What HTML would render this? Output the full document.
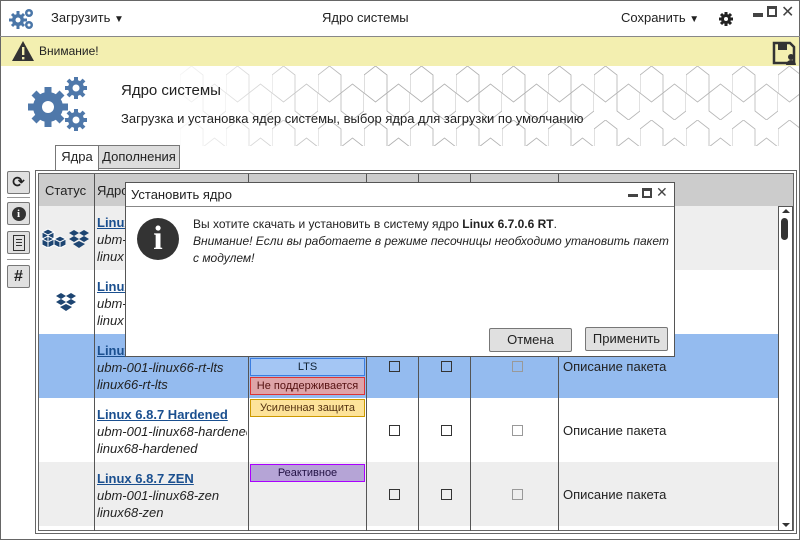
<!DOCTYPE html>
<html><head><meta charset="utf-8">
<style>
*{box-sizing:border-box;margin:0;padding:0}
body{width:800px;height:540px;overflow:hidden;background:#fff;font-family:"Liberation Sans","DejaVu Sans",sans-serif;font-size:13px;color:#222;position:relative}
.a{position:absolute}
.frame{left:0;top:0;width:800px;height:540px;border:1px solid #666}
.btn{background:#e0e0e0;border:1px solid #777;border-radius:2px}
.lnk{color:#1a4f8f;font-weight:bold;text-decoration:underline}
.it{font-style:italic;color:#222}
.cb{position:absolute;width:11px;height:11px;border:1px solid #333;background:transparent}
.cb.g{border-color:#999}
.tag{position:absolute;left:250px;width:115px;height:18px;font-size:11px;text-align:center;line-height:16px;border:1px solid}
</style></head><body>
<div class="a frame"></div>
<!-- top bar -->
<svg class="a" style="left:8px;top:6px" width="28" height="24" viewBox="0 0 28 24">
<g fill="#4a76a8"><circle cx="10" cy="14" r="6"/><circle cx="21" cy="7" r="4"/><circle cx="21" cy="19" r="4"/>
<g stroke="#4a76a8" stroke-width="3"><line x1="10" y1="5" x2="10" y2="23"/><line x1="1" y1="14" x2="19" y2="14"/><line x1="4" y1="8" x2="16" y2="20"/><line x1="16" y1="8" x2="4" y2="20"/></g></g>
<circle cx="10" cy="14" r="2.5" fill="#fff"/><circle cx="21" cy="7" r="1.5" fill="#fff"/><circle cx="21" cy="19" r="1.5" fill="#fff"/></svg>
<div class="a" style="left:51px;top:10px">Загрузить <span style="font-size:10px">▼</span></div>
<div class="a" style="left:322px;top:10px">Ядро системы</div>
<div class="a" style="left:621px;top:10px">Сохранить <span style="font-size:10px">▼</span></div>
<svg class="a" style="left:718px;top:11px" width="16" height="16" viewBox="0 0 16 16"><g fill="#222"><circle cx="8" cy="8" r="5"/><g stroke="#222" stroke-width="3"><line x1="8" y1="1" x2="8" y2="15"/><line x1="1" y1="8" x2="15" y2="8"/><line x1="3" y1="3" x2="13" y2="13"/><line x1="13" y1="3" x2="3" y2="13"/></g></g><circle cx="8" cy="8" r="2" fill="#fff"/></svg>
<div class="a" style="left:753px;top:13px;width:10px;height:4px;background:#444"></div>
<div class="a" style="left:767px;top:6px;width:10px;height:11px;border:2px solid #444;border-top-width:3px"></div>
<div class="a" style="left:781px;top:2px;font-size:16px;color:#444">✕</div>
<div class="a" style="left:0;top:36px;width:800px;height:1px;background:#888"></div>
<!-- yellow -->
<div class="a" style="left:1px;top:37px;width:798px;height:29px;background:#f3efb0"></div>
<svg class="a" style="left:11px;top:40px" width="24" height="22"><path d="M12 1 L23 21 L1 21 Z" fill="#333"/><rect x="11" y="7" width="2.4" height="8" fill="#f3efb0"/><rect x="11" y="17" width="2.4" height="2.4" fill="#f3efb0"/></svg>
<div class="a" style="left:39px;top:44px;font-size:12px">Внимание!</div>
<svg class="a" style="left:772px;top:41px" width="26" height="24"><path d="M2 2h16l4 4v16H2z" fill="none" stroke="#333" stroke-width="2.5"/><rect x="6" y="3" width="9" height="6" fill="#333"/><circle cx="19" cy="16" r="3" fill="#333"/><path d="M14 24a5 5 0 0 1 10 0z" fill="#333"/></svg>
<!-- header hex -->
<svg class="a" style="left:180px;top:66px" width="619" height="80">
<defs><pattern id="hx" width="46" height="54" patternUnits="userSpaceOnUse"><path d="M0 9l11.5-9 11.5 9v18l-11.5 9L0 27zM23 27v18l11.5 9 11.5-9V27L34.5 18 23 27" fill="none" stroke="#999" stroke-width="0.8"/></pattern>
<linearGradient id="fd" x1="0" x2="1"><stop offset="0" stop-color="#fff" stop-opacity="0.9"/><stop offset="0.3" stop-color="#fff" stop-opacity="0.2"/><stop offset="1" stop-color="#fff" stop-opacity="0.3"/></linearGradient></defs>
<rect width="619" height="80" fill="url(#hx)"/><rect width="619" height="80" fill="url(#fd)"/></svg>
<svg class="a" style="left:26px;top:74px" width="66" height="62" viewBox="0 0 66 62">
<g fill="#4f78aa"><circle cx="22" cy="33" r="15"/><g stroke="#4f78aa" stroke-width="7"><line x1="22" y1="13" x2="22" y2="53"/><line x1="2" y1="33" x2="42" y2="33"/><line x1="8" y1="19" x2="36" y2="47"/><line x1="36" y1="19" x2="8" y2="47"/></g>
<circle cx="50" cy="14" r="8"/><g stroke="#4f78aa" stroke-width="4"><line x1="50" y1="3" x2="50" y2="25"/><line x1="39" y1="14" x2="61" y2="14"/><line x1="42" y1="6" x2="58" y2="22"/><line x1="58" y1="6" x2="42" y2="22"/></g>
<circle cx="50" cy="46" r="8"/><g stroke="#4f78aa" stroke-width="4"><line x1="50" y1="35" x2="50" y2="57"/><line x1="39" y1="46" x2="61" y2="46"/><line x1="42" y1="38" x2="58" y2="54"/><line x1="58" y1="38" x2="42" y2="54"/></g></g>
<circle cx="22" cy="33" r="6" fill="#fff"/><circle cx="50" cy="14" r="3.5" fill="#fff"/><circle cx="50" cy="46" r="3.5" fill="#fff"/></svg>
<div class="a" style="left:121px;top:82px;font-size:15px">Ядро системы</div>
<div class="a" style="left:121px;top:111px;font-size:13px">Загрузка и установка ядер системы, выбор ядра для загрузки по умолчанию</div>
<!-- tabs -->
<div class="a" style="left:55px;top:145px;width:44px;height:26px;border:1px solid #777;border-bottom:none;background:#fff;text-align:center;line-height:22px">Ядра</div>
<div class="a" style="left:98px;top:145px;width:82px;height:24px;border:1px solid #777;background:#ddd;text-align:center;line-height:22px">Дополнения</div>
<!-- left toolbar -->
<div class="a btn" style="left:7px;top:171px;width:23px;height:23px;text-align:center;line-height:21px;font-weight:bold;font-size:15px">⟳</div>
<div class="a" style="left:7px;top:197px;width:23px;height:1px;background:#999"></div>
<div class="a btn" style="left:7px;top:202px;width:23px;height:23px"><div style="margin:4px auto;width:14px;height:14px;border-radius:7px;background:#333;color:#fff;font-size:11px;font-weight:bold;text-align:center;line-height:14px;font-family:'Liberation Serif',serif">i</div></div>
<div class="a btn" style="left:7px;top:231px;width:23px;height:23px"><div style="margin:3px auto;width:12px;height:16px;border:1.5px solid #333;padding:3px 2px"><div style="border-top:1px solid #333;height:3px"></div><div style="border-top:1px solid #333;height:3px"></div><div style="border-top:1px solid #333"></div></div></div>
<div class="a" style="left:7px;top:259px;width:23px;height:1px;background:#999"></div>
<div class="a btn" style="left:7px;top:265px;width:23px;height:23px;text-align:center;line-height:21px;font-weight:bold;font-size:16px">#</div>
<!-- table frame -->
<div class="a" style="left:35px;top:170px;width:762px;height:364px;border:1px solid #666"></div>
<div class="a" style="left:38px;top:173px;width:756px;height:358px;border:1px solid #666"></div>
<!-- header row -->
<div class="a" style="left:39px;top:174px;width:754px;height:32px;background:#ccc"></div>
<div class="a" style="left:45px;top:183px">Статус</div>
<div class="a" style="left:97px;top:183px">Ядро</div>
<!-- rows bg -->
<div class="a" style="left:39px;top:206px;width:740px;height:64px;background:#eee"></div>
<div class="a" style="left:39px;top:334px;width:740px;height:64px;background:#94bbef"></div>
<div class="a" style="left:39px;top:462px;width:740px;height:64px;background:#eee"></div>
<!-- col lines -->
<div class="a" style="left:94px;top:174px;width:1px;height:357px;background:#555"></div>
<div class="a" style="left:248px;top:174px;width:1px;height:357px;background:#555"></div>
<div class="a" style="left:366px;top:174px;width:1px;height:357px;background:#555"></div>
<div class="a" style="left:418px;top:174px;width:1px;height:357px;background:#555"></div>
<div class="a" style="left:470px;top:174px;width:1px;height:357px;background:#555"></div>
<div class="a" style="left:558px;top:174px;width:1px;height:357px;background:#555"></div>
<!-- scrollbar -->
<div class="a" style="left:778px;top:206px;width:15px;height:325px;border:1px solid #555;background:#fff"></div>
<div class="a" style="left:782px;top:209px;width:0;height:0;border-left:4px solid transparent;border-right:4px solid transparent;border-bottom:4px solid #333"></div>
<div class="a" style="left:781px;top:218px;width:7px;height:22px;border-radius:4px;background:#333"></div>
<div class="a" style="left:782px;top:523px;width:0;height:0;border-left:4px solid transparent;border-right:4px solid transparent;border-top:4px solid #333"></div>
<!-- status icons -->
<svg class="a" style="left:42px;top:228px" width="24" height="22" viewBox="0 0 24 22"><g fill="#1d4572" stroke="#fff" stroke-width="1"><path d="M6 1l6 3v6l-6 3-6-3V4z"/><path d="M0 11l6-3 6 3v6l-6 3-6-3z"/><path d="M12 11l6-3 6 3v6l-6 3-6-3z"/></g><g stroke="#fff" stroke-width="1" fill="none"><path d="M0 4l6 3 6-3M6 7v6M0 11l6 3 6-3M6 14v6M12 11l6 3 6-3M18 14v6"/></g></svg>
<svg class="a" style="left:68px;top:229px" width="22" height="20"><g fill="#1d4572"><path d="M1 4l5-3 5 3-5 3zM11 4l5-3 5 3-5 3zM1 10l5-3 5 3-5 3zM11 10l5-3 5 3-5 3zM5 15l6-3 6 3-6 4z"/></g></svg>
<svg class="a" style="left:55px;top:292px" width="22" height="20"><g fill="#1d4572"><path d="M1 4l5-3 5 3-5 3zM11 4l5-3 5 3-5 3zM1 10l5-3 5 3-5 3zM11 10l5-3 5 3-5 3zM5 15l6-3 6 3-6 4z"/></g></svg>
<!-- row texts -->
<div class="a" style="left:97px;top:214px;line-height:17px"><span class="lnk">Linux</span><br><span class="it">ubm-</span><br><span class="it">linux</span></div>
<div class="a" style="left:97px;top:278px;line-height:17px"><span class="lnk">Linux</span><br><span class="it">ubm-</span><br><span class="it">linux</span></div>
<div class="a" style="left:97px;top:342px;line-height:17px"><span class="lnk">Linux</span><br><span class="it">ubm-001-linux66-rt-lts</span><br><span class="it">linux66-rt-lts</span></div>
<div class="a" style="left:97px;top:406px;line-height:17px;width:150px;overflow:hidden;white-space:nowrap"><span class="lnk">Linux 6.8.7 Hardened</span><br><span class="it">ubm-001-linux68-hardened</span><br><span class="it">linux68-hardened</span></div>
<div class="a" style="left:97px;top:470px;line-height:17px"><span class="lnk">Linux 6.8.7 ZEN</span><br><span class="it">ubm-001-linux68-zen</span><br><span class="it">linux68-zen</span></div>
<!-- tags -->
<div class="tag" style="top:358px;background:#a4c6f4;border-color:#3b7de0;color:#123">LTS</div>
<div class="tag" style="top:377px;background:#dea4a8;border-color:#d33;color:#511">Не поддерживается</div>
<div class="tag" style="top:399px;background:#fde39a;border-color:#c90;color:#531">Усиленная защита</div>
<div class="tag" style="top:464px;background:#b5a4d6;border-color:#a0f;color:#214">Реактивное</div>
<!-- checkboxes -->
<div class="cb" style="left:389px;top:361px"></div><div class="cb" style="left:441px;top:361px"></div><div class="cb g" style="left:512px;top:361px"></div>
<div class="cb" style="left:389px;top:425px"></div><div class="cb" style="left:441px;top:425px"></div><div class="cb g" style="left:512px;top:425px"></div>
<div class="cb" style="left:389px;top:489px"></div><div class="cb" style="left:441px;top:489px"></div><div class="cb g" style="left:512px;top:489px"></div>
<div class="a" style="left:563px;top:359px">Описание пакета</div>
<div class="a" style="left:563px;top:423px">Описание пакета</div>
<div class="a" style="left:563px;top:487px">Описание пакета</div>
<!-- dialog -->
<div class="a" style="left:125px;top:182px;width:550px;height:175px;background:#fff;border:1px solid #555"></div>
<div class="a" style="left:126px;top:206px;width:548px;height:1px;background:#888"></div>
<div class="a" style="left:131px;top:187px">Установить ядро</div>
<div class="a" style="left:628px;top:194px;width:10px;height:3px;background:#444"></div>
<div class="a" style="left:642px;top:188px;width:10px;height:10px;border:2px solid #444;border-top-width:3px"></div>
<div class="a" style="left:656px;top:184px;font-size:14px;color:#444">✕</div>
<div class="a" style="left:137px;top:218px;width:42px;height:42px;border-radius:21px;background:#333;color:#fff;text-align:center;font:bold 34px/42px 'Liberation Serif',serif">i</div>
<div class="a" style="left:193px;top:216px;line-height:17px;font-size:12px;white-space:nowrap">Вы хотите скачать и установить в систему ядро <b>Linux 6.7.0.6 RT</b>.<br><i>Внимание! Если вы работаете в режиме песочницы необходимо утановить пакет<br>с модулем!</i></div>
<div class="a btn" style="left:489px;top:328px;width:83px;height:24px;text-align:center;line-height:22px">Отмена</div>
<div class="a btn" style="left:585px;top:327px;width:83px;height:24px;text-align:center;line-height:22px">Применить</div>
</body></html>
